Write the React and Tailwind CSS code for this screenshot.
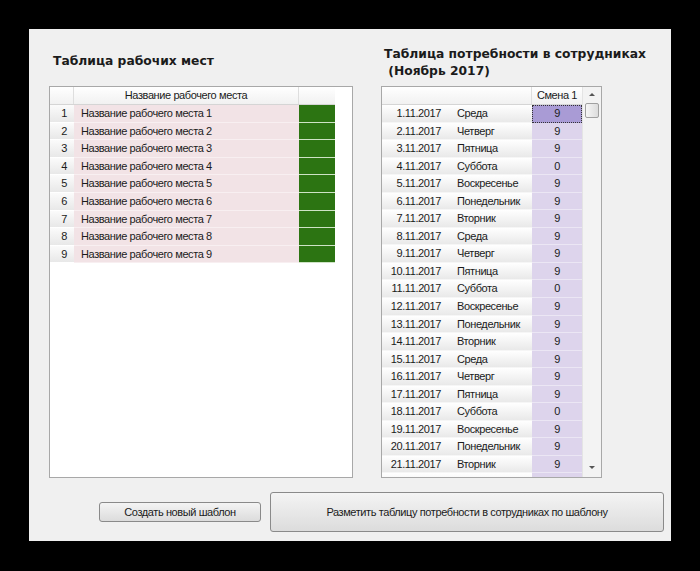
import React from "react"

const places = [1, 2, 3, 4, 5, 6, 7, 8, 9]

const dayNames = ["Среда", "Четверг", "Пятница", "Суббота", "Воскресенье", "Понедельник", "Вторник"]

const days = Array.from({ length: 21 }, (_, i) => {
    const name = dayNames[i % 7]
    return { date: `${i + 1}.11.2017`, name, value: name === "Суббота" ? 0 : 9 }
})

function WorkplacesTable() {
    return (
        <div className="h-[392px] w-[304px] border border-[#a8a8a8] bg-white overflow-hidden">
            <div className="flex h-[18px] w-[285px] border-b border-[#d5d5d5] bg-gradient-to-b from-white to-[#f1f1f1]">
                <div className="w-[24px] border-r border-[#dedede]"></div>
                <div className="w-[225px] border-r border-[#dedede] text-center leading-[17px]">Название рабочего места</div>
                <div className="w-[36px]"></div>
            </div>
            {places.map(n => (
                <div key={n} className="flex h-[17.6px]">
                    <div className="w-[24px] pr-[7px] text-right leading-[17px] bg-gradient-to-b from-[#fbfbfb] to-[#e8e8e8] border-b border-white">{n}</div>
                    <div className="w-[225px] pl-[7px] leading-[17px] bg-[#f2e3e6] border-b border-[#f8eff1]">Название рабочего места {n}</div>
                    <div className="w-[36px] bg-[#2c7412] border-b border-[#cfe3c6]"></div>
                </div>
            ))}
        </div>
    )
}

function NeedsTable() {
    return (
        <div className="flex h-[392px] w-[221px] border border-[#a8a8a8] bg-white overflow-hidden">
            <div className="w-[200px]">
                <div className="flex h-[18px] border-b border-[#d5d5d5] bg-gradient-to-b from-white to-[#f1f1f1]">
                    <div className="w-[150px] border-r border-[#dedede]"></div>
                    <div className="w-[50px] text-center leading-[17px]">Смена 1</div>
                </div>
                {days.map((d, i) => (
                    <div key={d.date} className="flex h-[17.55px]">
                        <div className="flex w-[150px] leading-[17px] bg-gradient-to-b from-white to-[#e9e9e9] border-b border-[#f6f6f6]">
                            <span className="w-[59px] text-right">{d.date}</span>
                            <span className="pl-[16px]">{d.name}</span>
                        </div>
                        {i === 0 ? (
                            <div className="w-[50px] text-center leading-[15px] bg-[#a99bd5] border border-dotted border-[#333]">{d.value}</div>
                        ) : (
                            <div className="w-[50px] text-center leading-[17px] bg-[#ddd4ec] border-b border-[#ebe6f4]">{d.value}</div>
                        )}
                    </div>
                ))}
                <div className="flex h-[10px]">
                    <div className="w-[150px] bg-gradient-to-b from-white to-[#f3f3f3]"></div>
                    <div className="w-[50px] bg-[#ddd4ec]"></div>
                </div>
            </div>
            <div className="flex w-[19px] flex-col items-center border-l border-[#e4e4e4] bg-[#f3f3f3]">
                <div className="mt-[6px] h-0 w-0 border-x-[3px] border-b-[3px] border-x-transparent border-b-[#555]"></div>
                <div className="mt-[7px] h-[15px] w-[14px] rounded-[2px] border border-[#a0a0a0] bg-gradient-to-r from-[#f6f6f6] to-[#dcdcdc]"></div>
                <div className="flex-1"></div>
                <div className="mb-[8px] h-0 w-0 border-x-[3px] border-t-[3px] border-x-transparent border-t-[#555]"></div>
            </div>
        </div>
    )
}

function App() {
    return (
        <div className="h-[571px] w-[700px] bg-black pl-[29px] pt-[29px]" style={{ fontFamily: '"Liberation Sans", Arial, sans-serif' }}>
            <div className="flex h-[512px] w-[642px] flex-col bg-[#f0f0f0] text-[11px] tracking-[-0.4px] text-[#1b1b1b]">
                <div className="flex">
                    <div className="ml-[20px] w-[304px]">
                        <div className="h-[57px] pl-[4px] pt-[24px]">
                            <h1 className="text-[12.3px] font-bold leading-[17px] tracking-normal" style={{ fontFamily: '"DejaVu Sans", sans-serif' }}>Таблица рабочих мест</h1>
                        </div>
                        <WorkplacesTable />
                    </div>
                    <div className="ml-[28px] w-[221px]">
                        <div className="h-[57px] pt-[17px]">
                            <h2 className="whitespace-nowrap pl-[3px] text-[12.3px] font-bold leading-[17px] tracking-normal" style={{ fontFamily: '"DejaVu Sans", sans-serif' }}>
                                Таблица потребности в сотрудниках<br />&nbsp;(Ноябрь 2017)
                            </h2>
                        </div>
                        <NeedsTable />
                    </div>
                </div>

                <div className="mt-[14px] flex items-center">
                    <button className="ml-[70px] h-[20px] w-[162px] rounded-[3px] border border-[#8a8a8a] bg-gradient-to-b from-[#f4f4f4] to-[#dcdcdc]">Создать новый шаблон</button>
                    <button className="ml-[9px] h-[40px] w-[394px] rounded-[3px] border border-[#8a8a8a] bg-gradient-to-b from-[#f4f4f4] to-[#dcdcdc]">Разметить таблицу потребности в сотрудниках по шаблону</button>
                </div>
            </div>
        </div>
    )
}

export default App
